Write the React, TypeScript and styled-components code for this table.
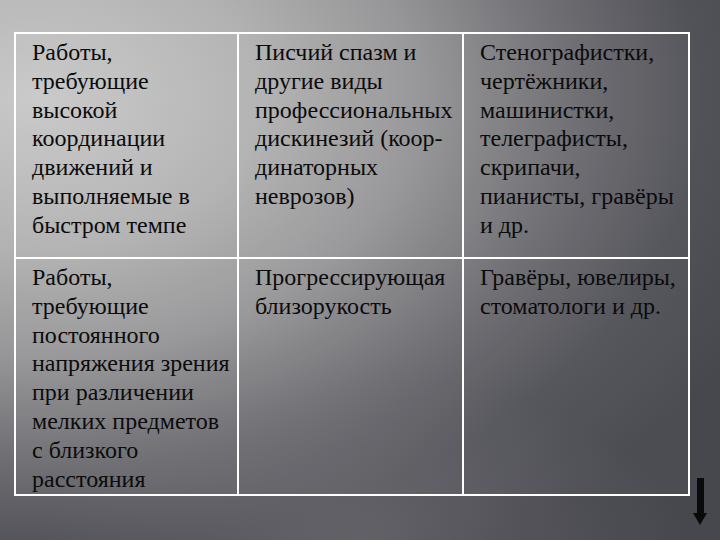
import { createGlobalStyle } from "styled-components";
import styled from "styled-components";

const GlobalStyle = createGlobalStyle`
  html, body {
    margin: 0;
    padding: 0;
  }
  body {
    font-family: "Liberation Serif", "Times New Roman", serif;
  }
`;

const Slide = styled.div`
  position: relative;
  width: 720px;
  height: 540px;
  overflow: hidden;
  box-sizing: border-box;
  padding: 32px 0 0 14px;
  background:
    radial-gradient(
      ellipse 45% 30% at 50% 100%,
      rgba(118, 118, 122, 0.5) 0%,
      rgba(118, 118, 122, 0) 100%
    ),
    radial-gradient(
      ellipse 110% 100% at 5% 18%,
      #c9c9c9 0%,
      #b2b2b2 28%,
      #969698 48%,
      #6c6c71 68%,
      #515158 84%,
      #47474e 100%
    );
`;

const Table = styled.div`
  width: 676px;
  height: 464px;
  box-sizing: border-box;
  border: 2px solid #ffffff;
  background: rgba(255, 255, 255, 0.03);
  display: grid;
  grid-template-columns: 223px 225px 224px;
  grid-template-rows: 225px 1fr;
`;

const Cell = styled.div<{ $lastCol?: boolean; $lastRow?: boolean }>`
  box-sizing: border-box;
  padding: 4px 6px 0 16px;
  border-right: ${(p) => (p.$lastCol ? "none" : "2px solid #ffffff")};
  border-bottom: ${(p) => (p.$lastRow ? "none" : "2px solid #ffffff")};
  color: #0b0b0b;
  font-family: "Liberation Serif", "Times New Roman", serif;
  font-size: 24px;
  line-height: 28.8px;
  white-space: nowrap;
`;

const Line = styled.div``;

const DownArrow = styled.svg`
  position: absolute;
  left: 692px;
  top: 477px;
`;

const rows: string[][][] = [
  [
    [
      "Работы,",
      "требующие",
      "высокой",
      "координации",
      "движений и",
      "выполняемые в",
      "быстром темпе",
    ],
    [
      "Писчий спазм и",
      "другие виды",
      "профессиональных",
      "дискинезий (коор-",
      "динаторных",
      "неврозов)",
    ],
    [
      "Стенографистки,",
      "чертёжники,",
      "машинистки,",
      "телеграфисты,",
      "скрипачи,",
      "пианисты, гравёры",
      "и др.",
    ],
  ],
  [
    [
      "Работы,",
      "требующие",
      "постоянного",
      "напряжения зрения",
      "при различении",
      "мелких предметов",
      "с близкого",
      "расстояния",
    ],
    ["Прогрессирующая", "близорукость"],
    ["Гравёры, ювелиры,", "стоматологи и др."],
  ],
];

export default function App() {
  return (
    <>
      <GlobalStyle />
      <Slide>
        <Table>
          {rows.map((row, r) =>
            row.map((lines, c) => (
              <Cell
                key={`${r}-${c}`}
                $lastCol={c === row.length - 1}
                $lastRow={r === rows.length - 1}
              >
                {lines.map((l, i) => (
                  <Line key={i}>{l}</Line>
                ))}
              </Cell>
            ))
          )}
        </Table>
        <DownArrow width="16" height="50" viewBox="0 0 16 50">
          <rect x="5" y="1" width="7" height="36" fill="#0a0a0a" />
          <polygon points="1,36 15,36 8,48" fill="#0a0a0a" />
        </DownArrow>
      </Slide>
    </>
  );
}
